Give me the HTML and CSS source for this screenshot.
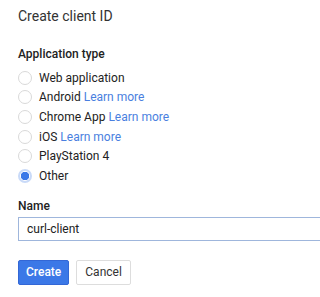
FILE: index.html
```html
<!DOCTYPE html>
<html lang="en">
<head>
  <meta charset="UTF-8">
  <title>Create client ID</title>
  <link rel="stylesheet" href="styles.css">
</head>
<body>
  <h1>Create client ID</h1>

  <div class="group-label">Application type</div>
  <div class="radio-list">
    <label class="radio"><span class="dot"></span>Web application</label>
    <label class="radio"><span class="dot"></span>Android <a href="#">Learn more</a></label>
    <label class="radio"><span class="dot"></span>Chrome App <a href="#">Learn more</a></label>
    <label class="radio"><span class="dot"></span>iOS <a href="#">Learn more</a></label>
    <label class="radio"><span class="dot"></span>PlayStation 4</label>
    <label class="radio"><span class="dot checked"></span>Other</label>
  </div>

  <div class="group-label name-label">Name</div>
  <div class="name-field">curl-client</div>

  <div class="button-container">
    <button class="primary">Create</button>
    <button>Cancel</button>
  </div>
</body>
</html>
```

FILE: styles.css
```css
body {
  font-family: Roboto, "Liberation Sans", sans-serif;
  margin: 0;
  padding: 0 0 0 18px;
  background: #fff;
  color: #222;
  overflow: hidden;
}
h1 {
  font-size: 14px;
  font-weight: normal;
  color: #333;
  margin: 6px 0 0 0;
  line-height: 20px;
}
.group-label {
  font-size: 12px;
  font-weight: 500;
  margin-top: 20px;
  line-height: 16px;
}
.radio-list {
  display: flex;
  flex-direction: column;
  margin-top: 6px;
}
.radio {
  display: flex;
  align-items: center;
  height: 19.6px;
  font-size: 12px;
}
.radio a {
  color: #4a7fe0;
  text-decoration: none;
  margin-left: 3px;
}
.dot {
  width: 14px;
  height: 14px;
  border: 1px solid #d9d9d9;
  border-radius: 50%;
  margin-right: 7px;
  box-sizing: border-box;
}
.dot.checked {
  border: 2px solid #c9daf8;
  background: radial-gradient(circle, #3b78e7 0 4px, #fff 4.5px);
}
.name-label {
  margin-top: 12px;
}
.name-field {
  margin-top: 3px;
  height: 24px;
  border: 1px solid #9fb6dc;
  border-right: none;
  box-sizing: border-box;
  padding: 0 8px;
  font-size: 12px;
  line-height: 22px;
}
.button-container {
  display: flex;
  gap: 7px;
  margin-top: 19px;
}
.button-container button {
  font-family: inherit;
  font-size: 12px;
  height: 25px;
  padding: 0 8px;
  border: 1px solid #ddd;
  border-radius: 2px;
  background: #fff;
  color: #333;
}
.button-container button.primary {
  padding: 0 7px;
  background: #3b78e7;
  border-color: #3367d6;
  color: #fff;
  font-weight: 500;
}
```
